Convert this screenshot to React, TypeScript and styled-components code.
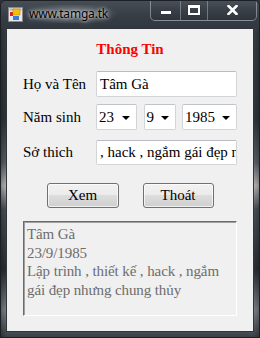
import React from "react";
import styled, { createGlobalStyle } from "styled-components";

const GlobalStyle = createGlobalStyle`
  html, body {
    margin: 0;
    padding: 0;
    background: #2d3238;
  }
`;

const SERIF = `"Liberation Serif", "Times New Roman", serif`;

const Window = styled.div`
  width: 260px;
  height: 338px;
  display: flex;
  flex-direction: column;
  box-sizing: border-box;
  background:
    linear-gradient(
      90deg,
      rgba(0, 0, 0, 0.25) 0px,
      rgba(255, 255, 255, 0) 6px,
      rgba(255, 255, 255, 0) 252px,
      rgba(0, 0, 0, 0.3) 260px
    ),
    linear-gradient(
      180deg,
      #4a5159 0%,
      #383e46 10%,
      #2f353c 35%,
      #5a6068 48%,
      #b9b8b8 55%,
      #4a5058 62%,
      #2a2f35 80%,
      #7d838a 92%,
      #3a4047 100%
    );
  border: 1px solid #1c1f23;
  border-radius: 6px 6px 0 0;
  overflow: hidden;
`;

const TitleBar = styled.div`
  height: 27px;
  display: flex;
  align-items: flex-start;
  background: linear-gradient(180deg, #464d55 0%, #363c44 60%, #32383f 100%);
`;

const AppIcon = styled.svg`
  margin: 6px 0 0 7px;
  flex-shrink: 0;
`;

const Caption = styled.div`
  margin: 4px 0 0 2px;
  padding: 0 10px 0 4px;
  height: 18px;
  line-height: 18px;
  font-family: "Noto Sans", "Open Sans", sans-serif;
  font-size: 12px;
  letter-spacing: -0.2px;
  color: #000;
  background: radial-gradient(
    ellipse 50% 60% at center,
    rgba(220, 224, 228, 0.35) 0%,
    rgba(220, 224, 228, 0.15) 60%,
    rgba(220, 224, 228, 0) 100%
  );
  text-shadow: 0 0 6px rgba(255, 255, 255, 0.8), 0 0 3px rgba(255, 255, 255, 0.7);
`;

const CaptionButtons = styled.div`
  margin-left: auto;
  margin-right: 2px;
  display: flex;
  height: 20px;
  margin-top: -1px;
  border: 1px solid rgba(190, 196, 204, 0.55);
  border-top: none;
  border-radius: 0 0 5px 5px;
  overflow: hidden;
  background: linear-gradient(180deg, #4b5159 0%, #3a4048 50%, #2f343b 100%);
`;

const CaptionButton = styled.div<{ $w: number }>`
  width: ${(p) => p.$w}px;
  height: 100%;
  display: flex;
  align-items: center;
  justify-content: center;
  box-sizing: border-box;
  border-left: 1px solid rgba(190, 196, 204, 0.45);
  &:first-child {
    border-left: none;
  }
`;

const MinGlyph = styled.div`
  width: 10px;
  height: 3px;
  margin-top: 5px;
  background: #fff;
  box-shadow: 0 0 1px #222;
`;

const MaxGlyph = styled.div`
  width: 8px;
  height: 5px;
  border: 2px solid #fff;
  border-top-width: 3px;
  box-shadow: 0 0 1px #222;
`;

const Client = styled.div`
  flex: 1;
  margin: 0 5px 5px 5px;
  border: 1px solid #30353b;
  background: #f0f0f0;
  padding: 0 16px;
  display: flex;
  flex-direction: column;
`;

const Heading = styled.div`
  margin-top: 11px;
  height: 18px;
  line-height: 18px;
  text-align: center;
  font-family: ${SERIF};
  font-size: 15px;
  font-weight: bold;
  color: #ff0000;
`;

const Row = styled.div<{ $top: number; $h: number }>`
  margin-top: ${(p) => p.$top}px;
  height: ${(p) => p.$h}px;
  display: grid;
  grid-template-columns: 73px 1fr;
  align-items: center;
`;

const Label = styled.div`
  font-family: ${SERIF};
  font-size: 15px;
  color: #000;
  white-space: nowrap;
`;

const TextBox = styled.div`
  height: 100%;
  box-sizing: border-box;
  background: #fff;
  border: 1px solid #d2d4d8;
  border-top-color: #b9bcc1;
  border-radius: 2px;
  padding: 0 3px;
  display: flex;
  align-items: center;
  overflow: hidden;
  white-space: nowrap;
  font-family: ${SERIF};
  font-size: 15px;
  color: #000;
`;

const Combos = styled.div`
  height: 100%;
  display: flex;
  justify-content: space-between;
`;

const Combo = styled.div<{ $w: number }>`
  width: ${(p) => p.$w}px;
  height: 100%;
  box-sizing: border-box;
  background: #fff;
  border: 1px solid #d2d4d8;
  border-top-color: #c0c3c8;
  border-radius: 2px;
  padding: 0 6px 0 2px;
  display: flex;
  align-items: center;
  justify-content: space-between;
  font-family: ${SERIF};
  font-size: 15px;
  color: #000;
`;

const Arrow = styled.span`
  width: 0;
  height: 0;
  border-left: 4px solid transparent;
  border-right: 4px solid transparent;
  border-top: 4px solid #000;
  margin-top: 2px;
`;

const ButtonRow = styled.div`
  margin-top: 18px;
  display: flex;
  justify-content: center;
  gap: 24px;
`;

const Button = styled.div<{ $w: number }>`
  width: ${(p) => p.$w}px;
  height: 25px;
  box-sizing: border-box;
  border: 1px solid #707070;
  border-radius: 3px;
  background: linear-gradient(180deg, #f2f2f2 0%, #ebebeb 49%, #dddddd 50%, #cfcfcf 100%);
  box-shadow: inset 0 0 0 1px rgba(255, 255, 255, 0.7);
  display: flex;
  align-items: center;
  justify-content: center;
  font-family: ${SERIF};
  font-size: 15px;
  color: #000;
`;

const Output = styled.div`
  margin-top: 13px;
  height: 95px;
  box-sizing: border-box;
  border-style: solid;
  border-width: 1px;
  border-color: #6b6b6b #ffffff #ffffff #6b6b6b;
  box-shadow: inset 1px 1px 0 #a0a0a0;
  background: #f0f0f0;
  padding: 3px 2px 0 3px;
  font-family: ${SERIF};
  font-size: 15px;
  letter-spacing: -0.1px;
  line-height: 18.7px;
  color: #6d6d6d;
`;

const App: React.FC = () => {
  return (
    <>
      <GlobalStyle />
      <Window>
        <TitleBar>
          <AppIcon width="15" height="15" viewBox="0 0 15 15">
            <rect x="0.5" y="0.5" width="14" height="14" fill="#e8e8e8" stroke="#8a8a8a" />
            <rect x="1.5" y="1.5" width="12" height="2" fill="#b0b0b0" />
            <rect x="2" y="5" width="3" height="4" fill="#e02020" />
            <rect x="5" y="2" width="7" height="6" fill="#f5c000" stroke="#c08a00" strokeWidth="0.6" />
            <rect x="5" y="9" width="6" height="4" fill="#3a7be0" />
          </AppIcon>
          <Caption>www.tamga.tk</Caption>
          <CaptionButtons>
            <CaptionButton $w={29}>
              <MinGlyph />
            </CaptionButton>
            <CaptionButton $w={27}>
              <MaxGlyph />
            </CaptionButton>
            <CaptionButton $w={49}>
              <svg width="11" height="10" viewBox="0 0 11 10">
                <path d="M1.5 1 L9.5 9 M9.5 1 L1.5 9" stroke="#fff" strokeWidth="2.6" strokeLinecap="square" />
              </svg>
            </CaptionButton>
          </CaptionButtons>
        </TitleBar>
        <Client>
          <Heading>Thông Tin</Heading>
          <Row $top={13} $h={26}>
            <Label>Họ và Tên</Label>
            <TextBox>Tâm Gà</TextBox>
          </Row>
          <Row $top={7} $h={26}>
            <Label>Năm sinh</Label>
            <Combos>
              <Combo $w={41}>
                23 <Arrow />
              </Combo>
              <Combo $w={32}>
                9 <Arrow />
              </Combo>
              <Combo $w={55}>
                1985 <Arrow />
              </Combo>
            </Combos>
          </Row>
          <Row $top={10} $h={25}>
            <Label>Sở thich</Label>
            <TextBox>, hack , ngắm gái đẹp nhưng</TextBox>
          </Row>
          <ButtonRow>
            <Button $w={72}>Xem</Button>
            <Button $w={71}>Thoát</Button>
          </ButtonRow>
          <Output>
            Tâm Gà
            <br />
            23/9/1985
            <br />
            Lập trình , thiết kế , hack , ngắm gái đẹp nhưng chung thủy
          </Output>
        </Client>
      </Window>
    </>
  );
};

export default App;
